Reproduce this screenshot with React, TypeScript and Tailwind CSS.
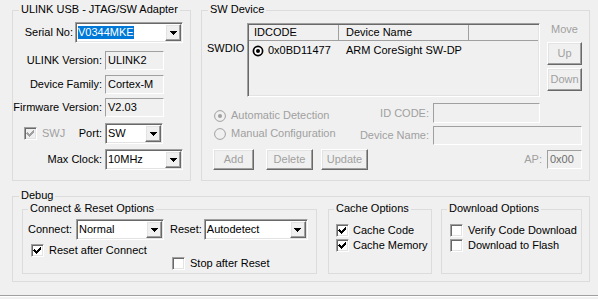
import React from "react";

const sunken =
  "border border-t-[#a0a0a0] border-l-[#a0a0a0] border-r-white border-b-white shadow-[inset_1px_1px_0_#696969,inset_-1px_-1px_0_#e3e3e3]";
const raised =
  "border border-t-white border-l-white border-r-[#696969] border-b-[#696969] shadow-[inset_-1px_-1px_0_#a0a0a0,inset_1px_1px_0_#e3e3e3]";
const flat =
  "border border-t-[#a0a0a0] border-l-[#a0a0a0] border-r-white border-b-white bg-[#f0f0f0]";

function Arrow() {
  return (
    <svg width="7" height="4" viewBox="0 0 7 4" shapeRendering="crispEdges">
      <path d="M0 0h7v1h-1v1h-1v1h-1v1h-1v-1h-1v-1h-1v-1h-1z" fill="#000" />
    </svg>
  );
}

function Combo({ className, children }: { className: string; children: React.ReactNode }) {
  return (
    <div className={`flex bg-white p-[1px] ${sunken} ${className}`}>
      <div className="flex min-w-0 flex-1 items-center overflow-hidden whitespace-nowrap pl-[1px]">{children}</div>
      <div className={`flex w-[16px] items-center justify-center bg-[#f0f0f0] ${raised}`}>
        <Arrow />
      </div>
    </div>
  );
}

function Btn({ className, children }: { className: string; children: React.ReactNode }) {
  return (
    <div className={`flex items-center justify-center bg-[#f0f0f0] text-[#a0a0a0] ${raised} ${className}`}>
      {children}
    </div>
  );
}

function Check({ checked, disabled, className = "" }: { checked?: boolean; disabled?: boolean; className?: string }) {
  return (
    <div
      className={`flex h-[13px] w-[13px] shrink-0 items-center justify-center p-[1px] ${sunken} ${
        disabled ? "bg-[#f0f0f0]" : "bg-white"
      } ${className}`}
    >
      {checked && (
        <svg width="9" height="9" viewBox="0 0 9 9" shapeRendering="crispEdges">
          <path
            d="M1 3h1v1h1v1h1v-1h1v-1h1v-1h1v-1h1v3h-1v1h-1v1h-1v1h-1v1h-1v-1h-1v-1h-1v-1h-1z"
            fill={disabled ? "#a0a0a0" : "#000"}
          />
        </svg>
      )}
    </div>
  );
}

function Radio({ checked, disabled }: { checked?: boolean; disabled?: boolean }) {
  if (disabled) {
    return (
      <svg width="12" height="12" viewBox="0 0 12 12" className="shrink-0">
        <circle cx="6" cy="6" r="5.4" fill="#f0f0f0" stroke="#a0a0a0" strokeWidth="1" />
        {checked && <circle cx="6" cy="6" r="2" fill="#a0a0a0" />}
      </svg>
    );
  }
  return (
    <svg width="12" height="12" viewBox="0 0 12 12" className="shrink-0">
      <circle cx="6" cy="6" r="4.6" fill="#fff" stroke="#000" strokeWidth="1.7" />
      {checked && <circle cx="6" cy="6" r="2" fill="#000" />}
    </svg>
  );
}

function Group({
  title,
  className,
  tml,
  children,
}: {
  title: string;
  className: string;
  tml: string;
  children: React.ReactNode;
}) {
  return (
    <div className={`shrink-0 border border-[#dcdcdc] ${className}`}>
      <div className={`-mt-[8px] w-fit whitespace-nowrap bg-[#f0f0f0] px-[2px] leading-[13px] ${tml}`}>{title}</div>
      {children}
    </div>
  );
}

export default function App() {
  return (
    <div className="h-[299px] w-[598px] overflow-hidden bg-[#f0f0f0] font-['Liberation_Sans',Arial,sans-serif] text-[11px] leading-[13px] text-black">
      <div className="flex pl-[12px] pt-[10px]">
        <Group title="ULINK USB - JTAG/SW Adapter" className="h-[171px] w-[179px]" tml="ml-[6px]">
          <div className="mt-[6px] flex items-center">
            <div className="w-[60px] whitespace-nowrap text-right">Serial No:</div>
            <Combo className="ml-[2px] h-[21px] w-[108px]">
              <span className="bg-[#0078d7] text-white">V0344MKE</span>
            </Combo>
          </div>
          <div className="mt-[8px] flex items-center">
            <div className="w-[89px] whitespace-nowrap text-right">ULINK Version:</div>
            <div className={`ml-[3px] flex h-[19px] w-[59px] items-center pl-[2px] ${flat}`}>ULINK2</div>
          </div>
          <div className="mt-[5px] flex items-center">
            <div className="w-[89px] whitespace-nowrap text-right">Device Family:</div>
            <div className={`ml-[3px] flex h-[19px] w-[59px] items-center pl-[2px] ${flat}`}>Cortex-M</div>
          </div>
          <div className="mt-[4px] flex items-center">
            <div className="w-[89px] whitespace-nowrap text-right">Firmware Version:</div>
            <div className={`ml-[3px] flex h-[19px] w-[59px] items-center pl-[2px] ${flat}`}>V2.03</div>
          </div>
          <div className="mt-[6px] flex items-center">
            <div className="flex w-[89px] items-center">
              <Check checked disabled className="ml-[11px]" />
              <span className="ml-[5px] text-[#a0a0a0]">SWJ</span>
              <span className="ml-auto">Port:</span>
            </div>
            <Combo className="ml-[3px] h-[21px] w-[58px]">SW</Combo>
          </div>
          <div className="mt-[5px] flex items-center">
            <div className="w-[89px] whitespace-nowrap text-right">Max Clock:</div>
            <Combo className="ml-[3px] h-[21px] w-[78px]">10MHz</Combo>
          </div>
        </Group>

        <Group title="SW Device" className="ml-[10px] h-[171px] w-[389px]" tml="ml-[6px]">
          <div className="mt-[7px] flex">
            <div className="w-[45px] pl-[5px] pt-[19px]">SWDIO</div>
            <div className={`h-[74px] w-[293px] bg-[#f0f0f0] p-[1px] ${sunken}`}>
              <div className="flex h-[16px] border-b border-[#a0a0a0] leading-[15px]">
                <div className="w-[90px] border-r border-[#a0a0a0] pl-[5px]">IDCODE</div>
                <div className="w-[130px] border-r border-[#a0a0a0] pl-[7px]">Device Name</div>
                <div className="flex-1" />
              </div>
              <div className="mt-[3px] flex items-center">
                <div className="flex w-[90px] items-center pl-[3px]">
                  <Radio checked />
                  <span className="ml-[4px]">0x0BD11477</span>
                </div>
                <div className="pl-[7px]">ARM CoreSight SW-DP</div>
              </div>
            </div>
            <div className="ml-[7px] flex w-[35px] flex-col">
              <div className="text-center text-[#a0a0a0]">Move</div>
              <Btn className="mt-[6px] h-[23px]">Up</Btn>
              <Btn className="mt-[3px] h-[23px]">Down</Btn>
            </div>
          </div>

          <div className="mt-[6px] flex">
            <div className="w-[148px] pt-[6px] text-[#a0a0a0]">
              <div className="flex items-center pl-[12px]">
                <Radio checked disabled />
                <span className="ml-[5px] whitespace-nowrap">Automatic Detection</span>
              </div>
              <div className="mt-[5px] flex items-center pl-[12px]">
                <Radio disabled />
                <span className="ml-[5px] whitespace-nowrap">Manual Configuration</span>
              </div>
            </div>
            <div className="flex flex-col text-[#a0a0a0]">
              <div className="flex items-center">
                <div className="w-[79px] whitespace-nowrap text-right">ID CODE:</div>
                <div className={`ml-[4px] h-[20px] w-[107px] ${flat}`} />
              </div>
              <div className="mt-[3px] flex items-center">
                <div className="w-[79px] whitespace-nowrap text-right">Device Name:</div>
                <div className={`ml-[4px] h-[19px] w-[149px] ${flat}`} />
              </div>
            </div>
          </div>

          <div className="mt-[4px] flex items-center">
            <Btn className="ml-[11px] h-[21px] w-[41px]">Add</Btn>
            <Btn className="ml-[12px] h-[21px] w-[47px]">Delete</Btn>
            <Btn className="ml-[8px] h-[21px] w-[47px]">Update</Btn>
            <span className="ml-auto text-[#a0a0a0]">AP:</span>
            <div className={`ml-[5px] mr-[7px] flex h-[19px] w-[35px] items-center pl-[2px] text-[#6d6d6d] ${flat}`}>
              0x00
            </div>
          </div>
        </Group>
      </div>

      <div className="ml-[12px] mt-[15px]">
        <Group title="Debug" className="h-[86px] w-[578px]" tml="ml-[6px]">
          <div className="mt-[7px] flex pl-[9px]">
            <Group title="Connect & Reset Options" className="h-[65px] w-[295px]" tml="ml-[5px]">
              <div className="mt-[4px] flex items-center">
                <div className="w-[49px] whitespace-nowrap pl-[5px]">Connect:</div>
                <Combo className="ml-[4px] h-[21px] w-[88px]">Normal</Combo>
                <div className="ml-[6px] whitespace-nowrap">Reset:</div>
                <Combo className="ml-[2px] h-[21px] w-[104px]">Autodetect</Combo>
              </div>
              <div className="mt-[4px] flex items-center pl-[8px]">
                <Check checked />
                <span className="ml-[5px] whitespace-nowrap">Reset after Connect</span>
              </div>
              <div className="flex items-center pl-[149px]">
                <Check />
                <span className="ml-[5px] whitespace-nowrap">Stop after Reset</span>
              </div>
            </Group>
            <Group title="Cache Options" className="ml-[11px] h-[65px] w-[104px]" tml="ml-[5px]">
              <div className="mt-[9px] flex items-center pl-[7px]">
                <Check checked />
                <span className="ml-[4px] whitespace-nowrap">Cache Code</span>
              </div>
              <div className="mt-[2px] flex items-center pl-[7px]">
                <Check checked />
                <span className="ml-[4px] whitespace-nowrap">Cache Memory</span>
              </div>
            </Group>
            <Group title="Download Options" className="ml-[9px] h-[65px] w-[141px]" tml="ml-[5px]">
              <div className="mt-[9px] flex items-center pl-[8px]">
                <Check />
                <span className="ml-[5px] whitespace-nowrap">Verify Code Download</span>
              </div>
              <div className="mt-[2px] flex items-center pl-[8px]">
                <Check />
                <span className="ml-[5px] whitespace-nowrap">Download to Flash</span>
              </div>
            </Group>
          </div>
        </Group>
      </div>

      <div className="mt-[13px] h-[1px] bg-[#a0a0a0]" />
      <div className="h-[1px] bg-white" />
    </div>
  );
}
